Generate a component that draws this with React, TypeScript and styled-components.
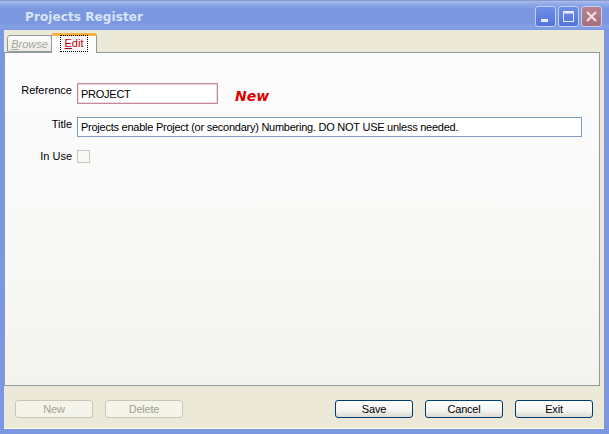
import React from "react";
import styled, { createGlobalStyle } from "styled-components";

const Global = createGlobalStyle`
  html, body { margin: 0; padding: 0; background: #ece9d8; }
  body { font-family: Tahoma, "Liberation Sans", Arial, sans-serif; }
  * { box-sizing: border-box; }
`;

const Window = styled.div`
  width: 609px;
  height: 434px;
  display: flex;
  flex-direction: column;
  background: #7b97e0;
  border-top: 1px solid #8a9ac8;
`;

const TitleBar = styled.div`
  height: 29px;
  flex: none;
  display: flex;
  align-items: center;
  padding: 0 7px 0 25px;
  background: linear-gradient(
    to bottom,
    #a9bff0 0px,
    #8fa9e8 3px,
    #7b97e0 8px,
    #7b97e0 22px,
    #86a2e6 26px,
    #7b97e0 29px
  );
`;

const TitleText = styled.div`
  flex: 1;
  color: #d8e4f8;
  font-family: "DejaVu Sans", "Liberation Sans", sans-serif;
  font-weight: bold;
  font-size: 12px;
  letter-spacing: 0.1px;
  margin-top: 3px;
`;

const CaptionButtons = styled.div`
  display: flex;
  gap: 2px;
  margin-top: 2px;
`;

const CapButton = styled.div<{ $close?: boolean }>`
  width: 21px;
  height: 21px;
  border: 1px solid #c4d0f2;
  border-radius: 3px;
  background: ${(p) =>
    p.$close
      ? "linear-gradient(to bottom, #b98290, #a86f7c)"
      : "linear-gradient(to bottom, #6e8ee6, #5475d8)"};
  display: flex;
  align-items: center;
  justify-content: center;
`;

const Client = styled.div`
  flex: 1;
  margin: 0 5px 5px 4px;
  background: #ece9d8;
  display: flex;
  flex-direction: column;
  border-bottom: 1px solid #fcfcfc;
`;

const TabStrip = styled.div`
  height: 22px;
  flex: none;
  display: flex;
  align-items: flex-end;
  padding-left: 3px;
  position: relative;
  z-index: 1;
`;

const Tab = styled.div<{ $active?: boolean }>`
  height: ${(p) => (p.$active ? 20 : 17)}px;
  width: ${(p) => (p.$active ? 46 : 45)}px;
  margin-left: ${(p) => (p.$active ? -1 : 0)}px;
  margin-bottom: ${(p) => (p.$active ? -1 : 0)}px;
  border: 1px solid #919b9c;
  border-bottom: ${(p) => (p.$active ? "none" : "1px solid #919b9c")};
  border-top: ${(p) => (p.$active ? "3px solid #f7b23e" : "1px solid #919b9c")};
  border-radius: 3px 3px 0 0;
  background: ${(p) =>
    p.$active ? "#fcfcfe" : "linear-gradient(to bottom, #fefefe, #ecebe6)"};
  display: flex;
  align-items: ${(p) => (p.$active ? "flex-start" : "center")};
  justify-content: center;
  font-size: 11px;
  font-family: "Liberation Sans", Arial, sans-serif;
`;

const TabLabel = styled.span<{ $active?: boolean }>`
  color: ${(p) => (p.$active ? "#c00000" : "#a6a59a")};
  font-style: ${(p) => (p.$active ? "normal" : "italic")};
  padding: ${(p) => (p.$active ? "0 4px" : "0")};
  outline: ${(p) => (p.$active ? "1px dotted #000" : "none")};
  line-height: 15px;
  margin-top: ${(p) => (p.$active ? "0" : "1px")};
  u { text-decoration: underline; }
`;

const Panel = styled.div`
  flex: 1;
  border: 1px solid #919b9c;
  margin-right: 4px;
  background: linear-gradient(to bottom, #fcfcfe 0%, #f8f8f6 60%, #f4f3ee 100%);
  padding: 30px 0 0 0;
  display: flex;
  flex-direction: column;
  font-family: "Liberation Sans", Arial, sans-serif;
  font-size: 11px;
`;

const Row = styled.div<{ $h: number; $mb: number }>`
  display: flex;
  align-items: center;
  height: ${(p) => p.$h}px;
  margin-bottom: ${(p) => p.$mb}px;
`;

const Label = styled.div`
  width: 67px;
  text-align: right;
  color: #000;
  margin-right: 5px;
  margin-top: 1px;
  align-self: flex-start;
  line-height: 13px;
`;

const TextBox = styled.div<{ $w: number; $accent?: boolean }>`
  width: ${(p) => p.$w}px;
  height: 100%;
  background: #fff;
  border: 1px solid ${(p) => (p.$accent ? "#c08a96" : "#7f9db9")};
  box-shadow: ${(p) => (p.$accent ? "inset 0 0 0 1px #f0d8dc" : "none")};
  display: flex;
  align-items: center;
  padding-left: 3px;
  color: #000;
  white-space: nowrap;
  letter-spacing: -0.25px;
`;

const NewBadge = styled.div`
  margin-left: 17px;
  color: #dd0000;
  font-family: "DejaVu Sans", Verdana, sans-serif;
  font-weight: bold;
  font-style: italic;
  font-size: 14px;
  margin-top: 5px;
`;

const Check = styled.div`
  width: 13px;
  height: 13px;
  border: 1px solid #c9c7ba;
  background: #f8f8f4;
  margin-top: 1px;
`;

const ButtonBar = styled.div`
  height: 42px;
  flex: none;
  display: flex;
  align-items: center;
  padding: 0 11px 0 11px;
  gap: 12px;
`;

const Spacer = styled.div`
  flex: 1;
`;

const Btn = styled.div<{ $disabled?: boolean }>`
  width: 78px;
  height: 18px;
  border: 1px solid ${(p) => (p.$disabled ? "#c9c7ba" : "#003c74")};
  border-radius: 3px;
  background: ${(p) =>
    p.$disabled
      ? "#f5f4ea"
      : "linear-gradient(to bottom, #ffffff 0%, #f4f4f0 60%, #dcdad0 100%)"};
  color: ${(p) => (p.$disabled ? "#a1a192" : "#000")};
  font-family: "Liberation Sans", Arial, sans-serif;
  font-size: 11px;
  letter-spacing: -0.2px;
  display: flex;
  align-items: center;
  justify-content: center;
  margin-top: 3px;
`;

export default function App() {
  return (
    <>
      <Global />
      <Window>
        <TitleBar>
          <TitleText>Projects Register</TitleText>
          <CaptionButtons>
            <CapButton>
              <svg width="19" height="19" viewBox="0 0 19 19">
                <rect x="5" y="12" width="7" height="3" fill="#e8eefc" />
              </svg>
            </CapButton>
            <CapButton>
              <svg width="19" height="19" viewBox="0 0 19 19">
                <rect x="4.5" y="4.5" width="10" height="10" fill="none" stroke="#e8eefc" strokeWidth="1" />
                <rect x="4.5" y="4.5" width="10" height="2" fill="#e8eefc" />
              </svg>
            </CapButton>
            <CapButton $close>
              <svg width="19" height="19" viewBox="0 0 19 19">
                <path d="M5 5 L14 14 M14 5 L5 14" stroke="#f0e0e4" strokeWidth="2.2" />
              </svg>
            </CapButton>
          </CaptionButtons>
        </TitleBar>
        <Client>
          <TabStrip>
            <Tab>
              <TabLabel>
                <u>B</u>rowse
              </TabLabel>
            </Tab>
            <Tab $active>
              <TabLabel $active>
                <u>E</u>dit
              </TabLabel>
            </Tab>
          </TabStrip>
          <Panel>
            <Row $h={21} $mb={13}>
              <Label>Reference</Label>
              <TextBox $w={141} $accent>PROJECT</TextBox>
              <NewBadge>New</NewBadge>
            </Row>
            <Row $h={20} $mb={12}>
              <Label>Title</Label>
              <TextBox $w={505}>
                Projects enable Project (or secondary) Numbering. DO NOT USE unless needed.
              </TextBox>
            </Row>
            <Row $h={14} $mb={0}>
              <Label>In Use</Label>
              <Check />
            </Row>
          </Panel>
          <ButtonBar>
            <Btn $disabled>New</Btn>
            <Btn $disabled>Delete</Btn>
            <Spacer />
            <Btn>Save</Btn>
            <Btn>Cancel</Btn>
            <Btn>Exit</Btn>
          </ButtonBar>
        </Client>
      </Window>
    </>
  );
}
